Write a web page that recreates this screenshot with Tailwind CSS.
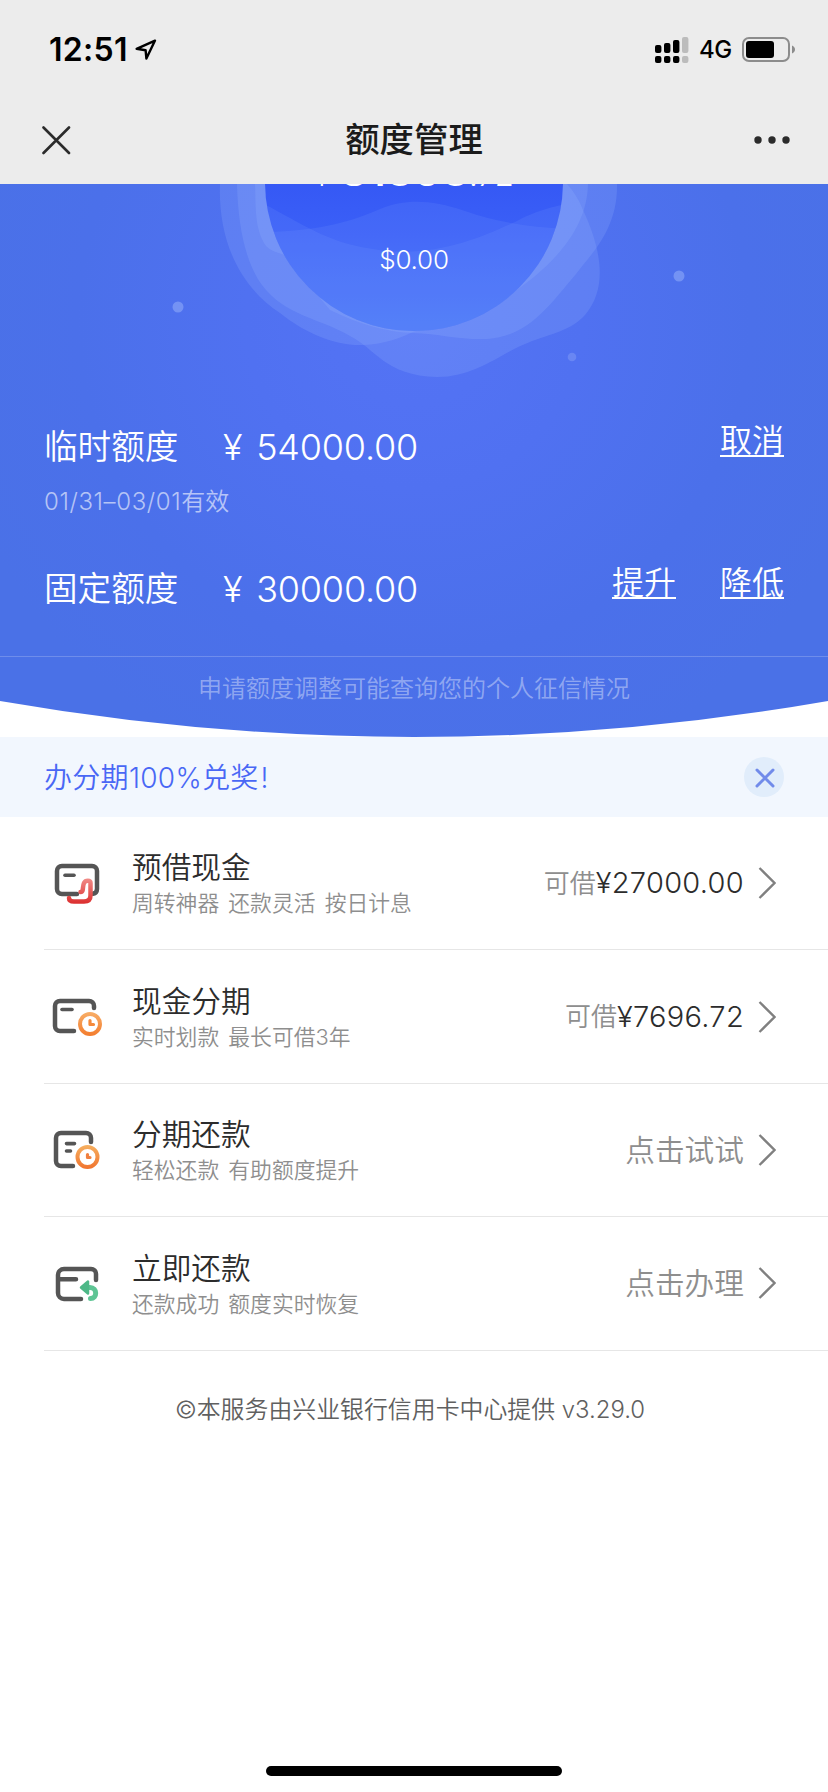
<!DOCTYPE html>
<html lang="zh-CN">
<head>
<meta charset="utf-8">
<title>额度管理</title>
<script src="https://cdn.jsdelivr.net/npm/@tailwindcss/browser@4"></script>
</head>
<body class="bg-white">
<div class="flex flex-col w-[828px] h-[1792px] overflow-hidden font-['Inter','Noto_Sans_CJK_SC',sans-serif] font-[350] text-[#2c2c2c]">

  <header class="h-[184px] shrink-0 bg-[#ececec] flex flex-col text-black">
    <div class="h-[100px] flex items-center justify-between pl-[49px] pr-[32px]">
      <div class="flex items-center gap-[7px]">
        <span class="text-[32px] font-semibold leading-none tracking-[0.300px]">12:51</span>
        <svg class="w-[22px] h-[22px]" viewBox="0 0 22 22" fill="none" stroke="#000" stroke-width="2.400" stroke-linejoin="round"><path d="M20 1.600 1.600 9.800l9 1.400.8 8.400z"/></svg>
      </div>
      <div class="flex items-center gap-[10px]">
        <svg class="w-[34px] h-[28px]" viewBox="0 0 34 28"><g fill="#000"><rect x="0" y="9" width="6.400" height="8" rx="2"/><rect x="9" y="7" width="6.400" height="10" rx="2"/><rect x="18" y="4" width="6.400" height="13" rx="2"/><rect x="0" y="20" width="6.400" height="7" rx="2"/><rect x="9" y="20" width="6.400" height="7" rx="2"/><rect x="18" y="20" width="6.400" height="7" rx="2"/></g><g fill="#bcbcbc"><rect x="27" y="1" width="6.400" height="16" rx="2"/><rect x="27" y="20" width="6.400" height="7" rx="2"/></g></svg>
        <span class="text-[24px] font-medium leading-none tracking-[-0.300px]">4G</span>
        <svg class="w-[54px] h-[26px]" viewBox="0 0 54 26"><rect x="1" y="1" width="46" height="23" rx="6" fill="none" stroke="#8c8c8c" stroke-width="2"/><rect x="4" y="4" width="28" height="17" rx="3"/><path d="M50 8.500c4 1.500 4 6.500 0 8z" fill="#8c8c8c"/></svg>
      </div>
    </div>
    <div class="h-[84px] grid grid-cols-3 items-center px-[42px] pb-[4px]">
      <svg class="w-[29px] h-[29px]" viewBox="0 0 29 29" stroke="#2b2b2b" stroke-width="2.600" stroke-linecap="round"><path d="M1.500 1.500 27 27M27 1.500 1.500 27"/></svg>
      <h1 class="text-[34.400px] font-medium leading-none text-center text-[#1b1b1b] whitespace-nowrap">额度管理</h1>
      <svg class="w-[36px] h-[8px] justify-self-end mr-[-4px]" viewBox="0 0 36 8" fill="#2b2b2b"><circle cx="4" cy="4" r="3.700"/><circle cx="18" cy="4" r="3.700"/><circle cx="32" cy="4" r="3.700"/></svg>
    </div>
  </header>

  <section class="relative h-[553px] shrink-0 overflow-hidden text-white">
    <svg class="absolute inset-0 w-full h-full" viewBox="0 184 828 553">
      <defs>
        <radialGradient id="bg" gradientUnits="userSpaceOnUse" cx="414" cy="320" r="480"><stop offset="0" stop-color="#5473f5"/><stop offset=".35" stop-color="#5071f1"/><stop offset=".7" stop-color="#4b70ea"/><stop offset="1" stop-color="#4a71e7"/></radialGradient>
        <linearGradient id="sea" x1="0" y1="0" x2="0" y2="1"><stop offset=".5" stop-color="#3558f5"/><stop offset=".68" stop-color="#3b60f7"/><stop offset="1" stop-color="#4674f6"/></linearGradient>
        <clipPath id="disc"><circle cx="414" cy="182" r="149"/></clipPath>
      </defs>
      <path fill="url(#bg)" d="M0 184H828V701Q414 773 0 701Z"/>
      <g fill="#9db8ff" fill-opacity=".2">
        <path d="M220 184C218 235 236 284 280 313C305 333 335 346 363 345C385 344 400 338 413 332C450 322 485 310 507 297C545 271 587 235 588 184Z"/>
        <path d="M237 184C238 225 245 262 262 285C285 316 320 318 350 336C375 348 385 376 437 377C475 377 500 354 525 344C545 335 570 332 585 315C610 286 599 244 583 210Q577 195 567 184Z"/>
        <path d="M255 184C256 205 254 229 266 246C272 252 278 252 284 255L330 310Q375 332 413 333C440 334 460 340 487 339C530 336 550 304 576 274C590 255 618 230 617 184Z"/>
      </g>
      <circle cx="414" cy="182" r="149" fill="url(#sea)"/>
      <g clip-path="url(#disc)" fill="#7da0ff" fill-opacity=".15">
        <path d="M260 232C320 232 355 220 380 209C405 199 430 199 465 211Q510 227 570 229V340H260Z"/>
        <path d="M260 202C300 222 325 242 370 248.500C430 260 480 238 515 222Q535 210 570 203V340H260Z"/>
      </g>
      <g fill="#8ea8f8" fill-opacity=".6"><circle cx="178" cy="307" r="5.500"/><circle cx="679" cy="276" r="5.500"/><circle cx="572" cy="357" r="4.300" fill-opacity=".4"/></g>
    </svg>
    <div class="relative h-full flex flex-col">
      <div class="flex items-baseline justify-center leading-none -mt-[38px] h-[36px] whitespace-nowrap">
        <span class="text-[28px] mr-[10px]">¥</span><span class="text-[46px] font-medium tracking-[-1px]">81393</span><span class="text-[31px]">.72</span>
      </div>
      <div class="mt-[62px] h-[32px] text-center text-[26px] leading-[32px] tracking-[-0.200px]">$0.00</div>
      <div class="mt-[143px] h-[60px] flex justify-between px-[44px]">
        <div class="flex items-center h-[56px] leading-none">
          <span class="w-[179px] text-[33.600px]">临时额度</span><span class="text-[36px] whitespace-pre [word-spacing:4px] tracking-[-0.200px]">¥ 54000.00</span>
        </div>
        <span class="text-[32px] leading-[44px] h-[38px] border-b-2 border-white">取消</span>
      </div>
      <div class="mt-[6px] h-[34px] px-[44px] text-[24px] leading-[34px] text-white/60"><span class="tracking-[0.600px]">01/31–03/01</span>有效</div>
      <div class="mt-[42px] h-[60px] flex justify-between px-[44px]">
        <div class="flex items-center h-[56px] leading-none">
          <span class="w-[179px] text-[33.600px]">固定额度</span><span class="text-[36px] whitespace-pre [word-spacing:4px] tracking-[-0.200px]">¥ 30000.00</span>
        </div>
        <div class="flex gap-[44px] text-[32px] leading-[44px]">
          <span class="h-[38px] border-b-2 border-white">提升</span>
          <span class="h-[38px] border-b-2 border-white">降低</span>
        </div>
      </div>
      <div class="mt-[35px] pt-[14px] border-t border-white/20 text-center text-[24px] leading-[36px] text-white/40">申请额度调整可能查询您的个人征信情况</div>
    </div>
  </section>

  <div class="h-[80px] shrink-0 bg-[#f2f7fe] flex items-center justify-between px-[44px] text-[#4967f5]">
    <span class="text-[28px] leading-[40px] pt-[2px] tracking-[0.300px]">办分期100%兑奖<span class="ml-[2px]">!</span></span>
    <span class="w-[40px] h-[40px] rounded-full bg-[#e1edfb] flex items-center justify-center"><svg class="w-[20px] h-[20px] ml-px mt-px" viewBox="0 0 20 20" stroke="#718bea" stroke-width="3" stroke-linecap="round"><path d="m2 2 16 16M18 2 2 18"/></svg></span>
  </div>

  <main class="pl-[44px] flex flex-col shrink-0">
    <div class="h-[133px] border-b border-[#e6e6e6] flex items-center pr-[52px]">
      <svg class="w-[64px] h-[64px] mr-[24px]" viewBox="44 850 64 64" fill="none" stroke-linecap="round" stroke-width="4.500"><defs><linearGradient id="red" gradientUnits="userSpaceOnUse" x1="0" y1="878" x2="0" y2="902"><stop stop-color="#f08a86"/><stop offset="1" stop-color="#dc3030"/></linearGradient></defs><path stroke="#555" d="M77 893H62a5 5 0 0 1-5-5V870a5 5 0 0 1 5-5H92a5 5 0 0 1 5 5V888a5 5 0 0 1-4 4.800"/><path stroke="#555" stroke-width="3.600" d="M65 874.300h9"/><path stroke="url(#red)" d="M69 897c0 3 3 3.500 5 3.500H84c4 0 6.500-2 6.500-6V882c0-3-5-3-6.500 0-1 2-1 5-1.200 6.500-.3 1.500-1.300 2.500-2.300 2.500"/></svg>
      <div class="flex-1"><div class="text-[29.700px] leading-[40px]">预借现金</div><div class="text-[21.800px] leading-[32px] text-[#8e8e8e] [word-spacing:3px]">周转神器 还款灵活 按日计息</div></div>
      <div class="flex items-center"><span class="text-[26px] text-[#8e8e8e]">可借</span><span class="text-[29px] tracking-[0.300px]">¥27000.00</span><svg class="w-[18px] h-[32px] ml-[14px]" viewBox="0 0 18 32" fill="none" stroke="#808080" stroke-width="2.300"><path d="m1.500 1 15 15-15 15"/></svg></div>
    </div>
    <div class="h-[134px] border-b border-[#e6e6e6] flex items-center pr-[52px]">
      <svg class="w-[64px] h-[64px] mr-[24px]" viewBox="44 984 64 64" fill="none" stroke-linecap="round" stroke-width="4.500"><defs><linearGradient id="or" gradientUnits="userSpaceOnUse" x1="0" y1="1010" x2="0" y2="1036"><stop stop-color="#f8b06a"/><stop offset="1" stop-color="#f37a2b"/></linearGradient></defs><path stroke="#555" d="M74 1030H60a5 5 0 0 1-5-5V1005a5 5 0 0 1 5-5H89a5 5 0 0 1 5 5V1007"/><path stroke="#555" stroke-width="3.600" d="M62 1008.500h10"/><circle cx="90" cy="1023" r="10" stroke="url(#or)" stroke-width="4"/><path stroke="#f58a3c" stroke-width="3.200" stroke-linejoin="round" d="M90 1019.500v4h3.500"/></svg>
      <div class="flex-1"><div class="text-[29.700px] leading-[40px]">现金分期</div><div class="text-[21.800px] leading-[32px] text-[#8e8e8e] [word-spacing:3px]">实时划款 最长可借3年</div></div>
      <div class="flex items-center"><span class="text-[26px] text-[#8e8e8e]">可借</span><span class="text-[29px] tracking-[0.300px]">¥7696.72</span><svg class="w-[18px] h-[32px] ml-[14px]" viewBox="0 0 18 32" fill="none" stroke="#808080" stroke-width="2.300"><path d="m1.500 1 15 15-15 15"/></svg></div>
    </div>
    <div class="h-[133px] border-b border-[#e6e6e6] flex items-center pr-[52px]">
      <svg class="w-[64px] h-[64px] mr-[24px]" viewBox="44 1118 64 64" fill="none" stroke-linecap="round" stroke-width="4.500"><defs><linearGradient id="or2" gradientUnits="userSpaceOnUse" x1="0" y1="1145" x2="0" y2="1170"><stop stop-color="#f6b060"/><stop offset="1" stop-color="#f0702b"/></linearGradient></defs><path stroke="#555" d="M73 1166H61a5 5 0 0 1-5-5V1138a5 5 0 0 1 5-5H86a5 5 0 0 1 5 5V1142"/><path stroke="#555" stroke-width="3.600" d="M66.500 1143.600h8M66.500 1151h4"/><circle cx="87.500" cy="1157" r="10" stroke="url(#or2)" stroke-width="4"/><path stroke="#f08040" stroke-width="3.200" stroke-linejoin="round" d="M87.500 1154.500v3h2.500"/></svg>
      <div class="flex-1"><div class="text-[29.700px] leading-[40px]">分期还款</div><div class="text-[21.800px] leading-[32px] text-[#8e8e8e] [word-spacing:3px]">轻松还款 有助额度提升</div></div>
      <div class="flex items-center"><span class="text-[29.700px] text-[#8e8e8e]">点击试试</span><svg class="w-[18px] h-[32px] ml-[14px]" viewBox="0 0 18 32" fill="none" stroke="#808080" stroke-width="2.300"><path d="m1.500 1 15 15-15 15"/></svg></div>
    </div>
    <div class="h-[134px] border-b border-[#e6e6e6] flex items-center pr-[52px]">
      <svg class="w-[64px] h-[64px] mr-[24px]" viewBox="44 1252 64 64" fill="none" stroke-linecap="round" stroke-width="4.500"><path stroke="#555" d="M81 1299H64a6 6 0 0 1-6-6V1275a6 6 0 0 1 6-6H91a5 5 0 0 1 5 5V1280M59 1279.300H76"/><path stroke="#5fc595" stroke-width="5" d="M87 1287.500h3c7.500 0 7.500 11 .5 11"/><path fill="#4db887" stroke="#4db887" stroke-width="2.500" stroke-linejoin="round" d="M81 1287.500l7-6v12z"/></svg>
      <div class="flex-1"><div class="text-[29.700px] leading-[40px]">立即还款</div><div class="text-[21.800px] leading-[32px] text-[#8e8e8e] [word-spacing:3px]">还款成功 额度实时恢复</div></div>
      <div class="flex items-center"><span class="text-[29.700px] text-[#8e8e8e]">点击办理</span><svg class="w-[18px] h-[32px] ml-[14px]" viewBox="0 0 18 32" fill="none" stroke="#808080" stroke-width="2.300"><path d="m1.500 1 15 15-15 15"/></svg></div>
    </div>
  </main>

  <footer class="flex-1 flex flex-col items-center justify-between pt-[41px] pb-[16px]">
    <p class="text-[23.900px] leading-[36px] text-[#606060] whitespace-nowrap -ml-[8px]">©本服务由兴业银行信用卡中心提供 v3.29.0</p>
    <div class="w-[296px] h-[10px] rounded-full bg-black"></div>
  </footer>
</div>
</body>
</html>
